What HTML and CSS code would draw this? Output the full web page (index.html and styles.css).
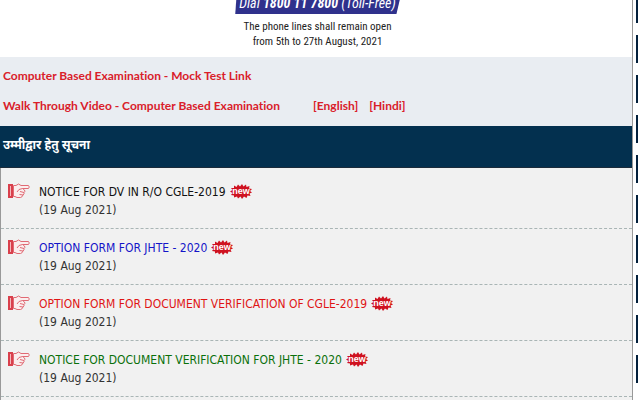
FILE: index.html
```
<!DOCTYPE html>
<html lang="en">
<head>
    <meta charset="UTF-8">
    <title>Notices for Candidates</title>
    <link rel="stylesheet" href="styles.css">
</head>
<body>
    <!-- shared icons -->
    <svg class="sprite" aria-hidden="true">
        <symbol id="hand" viewBox="0 0 22 16">
            <path fill="#d9404c" d="M0 1h5v14H0z"/>
            <path fill="none" stroke="#f4b8bc" d="M2.500 3v10"/>
            <path fill="#fbeeee" stroke="#e06a74" stroke-width="1" d="M5.500 2.500L8 2.500L10.500 1L13 2.500H20.500Q22 4 20.500 5.500H14.500L16.500 7Q17.500 8.500 16 9.500Q16.500 11 15 12Q14.500 14 12.500 14.500H9L7 13.500H5.500Z"/>
            <path fill="none" stroke="#e06a74" stroke-width="1" d="M14.500 5.500L11 6.500L9 9M12 8.500L16 9.500M11.500 11.500L15 12"/>
        </symbol>
        <symbol id="burst" viewBox="0 0 22 15">
            <path fill="#cf1220" d="M0 7.500L2.500 6L1 4L4 4L4 1.500L6.500 3L8 0.500L10 2.500L12 0L13.500 2.500L16 0.500L16.500 3L19.500 2L19 4.500L22 5L20 7L22 8.500L19.500 9.500L20.500 12L17.500 11.500L16.500 14L14 12.500L12 15L10.500 12.500L8 14.500L7 12.500L4 13.500L4 11.500L1 11L2.500 9Z"/>
            <text x="11" y="10" text-anchor="middle" class="burst-text">new</text>
        </symbol>
    </svg>

    <div class="page">
        <main class="content">
            <div class="helpline">
                <div class="dial">Dial <b>1800 11 7800</b> (Toll-Free)</div>
                <p>The phone lines shall remain open<br>from 5th to 27th August, 2021</p>
            </div>

            <div class="exam-links">
                <a href="#">Computer Based Examination - Mock Test Link</a>
                <div class="video-links">
                    <a href="#" class="video">Walk Through Video - Computer Based Examination</a>
                    <a href="#">[English]</a>
                    <a href="#">[Hindi]</a>
                </div>
            </div>

            <h2 class="notice-title" lang="hi">उम्मीद्वार हेतु सूचना</h2>

            <ul class="notices">
                <li class="notice">
                    <svg class="hand"><use href="#hand"/></svg>
                    <div>
                        <a href="#" class="black">NOTICE FOR DV IN R/O CGLE-2019</a><svg class="new"><use href="#burst"/></svg>
                        <div class="date">(19 Aug 2021)</div>
                    </div>
                </li>
                <li class="notice">
                    <svg class="hand"><use href="#hand"/></svg>
                    <div>
                        <a href="#" class="blue">OPTION FORM FOR JHTE - 2020</a><svg class="new"><use href="#burst"/></svg>
                        <div class="date">(19 Aug 2021)</div>
                    </div>
                </li>
                <li class="notice">
                    <svg class="hand"><use href="#hand"/></svg>
                    <div>
                        <a href="#" class="red">OPTION FORM FOR DOCUMENT VERIFICATION OF CGLE-2019</a><svg class="new"><use href="#burst"/></svg>
                        <div class="date">(19 Aug 2021)</div>
                    </div>
                </li>
                <li class="notice">
                    <svg class="hand"><use href="#hand"/></svg>
                    <div>
                        <a href="#" class="green">NOTICE FOR DOCUMENT VERIFICATION FOR JHTE - 2020</a><svg class="new"><use href="#burst"/></svg>
                        <div class="date">(19 Aug 2021)</div>
                    </div>
                </li>
            </ul>
        </main>

        <!-- left edge of the side menu -->
        <div class="side-menu">
            <span></span><span></span><span></span><span></span><span></span>
            <span></span><span></span><span></span><span></span><span></span>
        </div>
    </div>
</body>
</html>
```
FILE: styles.css
```
body {
    margin: 0;
    background-color: white;
    font-family: "DejaVu Sans Condensed", "DejaVu Sans", sans-serif;
    font-size: 12px;
    color: #333;
}

a {
    text-decoration: none;
}

.sprite {
    display: none;
}

.page {
    display: flex;
    height: 100vh;
    overflow: hidden;
}

.content {
    flex: 1;
    border-right: 1px solid #999;
}

.helpline {
    display: flex;
    flex-direction: column;
    align-items: center;
    height: 57px;
    padding-left: 3px;
    font-family: "Roboto Condensed", Roboto, sans-serif;
    font-size: 11px;
    line-height: 15px;
    text-align: center;
    color: #222;
}

.helpline p {
    margin: 5px 0 0;
}

.dial {
    box-sizing: border-box;
    height: 14px;
    padding: 0 4px;
    background-color: #2f318c;
    clip-path: polygon(1px 0, 100% 0, 98% 100%, 0 100%);
    color: white;
    font-size: 14px;
    font-style: italic;
    line-height: 6px;
}

.exam-links {
    padding: 9px 3px 10px;
    background-color: #e9edf2;
    font-family: Lato, sans-serif;
    font-weight: bold;
    font-variant-ligatures: none;
    line-height: 20px;
}

.exam-links a {
    color: #d9202a;
}

.video-links {
    display: flex;
    gap: 11px;
    margin-top: 10px;
}

.video {
    margin-right: 22px;
}

.notice-title {
    margin: 0;
    padding: 0 3px;
    background-color: #03304f;
    border-bottom: 1px solid #1b2b3a;
    font-family: "Noto Sans Devanagari", "Noto Sans", sans-serif;
    font-size: 12px;
    line-height: 41px;
    color: white;
}

.notices {
    margin: 0;
    padding: 5px 0 60px;
    list-style: none;
    background-color: #f1f1f1;
    border-left: 1px solid #999;
}

.notice {
    display: flex;
    gap: 9px;
    padding: 10px 7px 9px;
    border-bottom: 1px dashed #a9b5b5;
    line-height: 18px;
}

.hand {
    width: 22px;
    height: 16px;
}

.new {
    width: 22px;
    height: 15px;
    margin-left: 4px;
    vertical-align: -3px;
}

.burst-text {
    font-family: "Liberation Sans", sans-serif;
    font-size: 9px;
    font-weight: bold;
    fill: white;
}

.black { color: #111; }
.blue { color: #1414c8; }
.red { color: #e01414; }
.green { color: #0a700a; }

.side-menu {
    display: flex;
    flex-direction: column;
    gap: 12px;
    padding-left: 3px;
}

.side-menu span {
    flex: none;
    width: 2px;
    height: 28px;
    background-color: #03203c;
}

.side-menu span:first-child {
    height: 23px;
}
```
